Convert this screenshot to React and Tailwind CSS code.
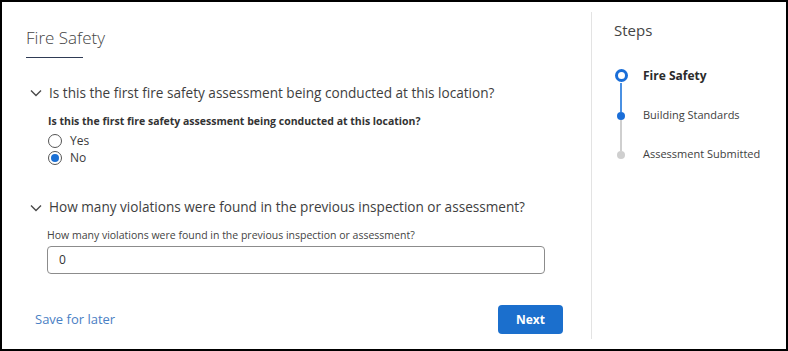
import React, { useState } from "react";

const font = { fontFamily: '"Open Sans", "Noto Sans", sans-serif' };

function Chevron() {
  return (
    <svg width="12" height="8" viewBox="0 0 12 8" className="shrink-0">
      <path d="M1 1.5 L6 6.5 L11 1.5" fill="none" stroke="#4a4a4a" strokeWidth="1.4" />
    </svg>
  );
}

function Radio({ checked, label, onClick }) {
  return (
    <label className="flex items-center gap-[8px] cursor-pointer h-[17px] leading-[17px]" onClick={onClick}>
      <span className="w-[14px] h-[14px] rounded-full border border-[#555] flex items-center justify-center bg-white">
        {checked && <span className="w-[8px] h-[8px] rounded-full bg-[#1a6fd4]" />}
      </span>
      <span className="text-[12px] leading-[17px] text-[#3a3a3a]">{label}</span>
    </label>
  );
}

export default function App() {
  const [firstTime, setFirstTime] = useState("no");
  const [violations, setViolations] = useState("0");

  return (
    <div style={font} className="w-[788px] h-[351px] border-2 border-black bg-white flex">
      <div className="w-[589px] flex flex-col pl-[24px] pr-[24px] pt-[24px]">
        <h1 className="text-[17px] font-light text-[#444] leading-[24px]">Fire Safety</h1>
        <div className="w-[57px] h-[1px] bg-[#2f3b55] mt-[7px]" />

        <div className="mt-[25px] flex items-center gap-[7px] pl-[4px]">
          <Chevron />
          <span className="text-[13.6px] text-[#3e3e3e]">Is this the first fire safety assessment being conducted at this location?</span>
        </div>
        <div className="pl-[22px] mt-[10px]">
          <div className="text-[10.5px] font-bold text-[#333] leading-[16px]">Is this the first fire safety assessment being conducted at this location?</div>
          <div className="mt-[3px] flex flex-col">
            <Radio checked={firstTime === "yes"} label="Yes" onClick={() => setFirstTime("yes")} />
            <Radio checked={firstTime === "no"} label="No" onClick={() => setFirstTime("no")} />
          </div>
        </div>

        <div className="mt-[31px] flex items-center gap-[7px] pl-[4px]">
          <Chevron />
          <span className="text-[13.6px] text-[#3e3e3e]">How many violations were found in the previous inspection or assessment?</span>
        </div>
        <div className="pl-[21px] mt-[10px]">
          <div className="text-[10.5px] text-[#444] leading-[14px]">How many violations were found in the previous inspection or assessment?</div>
          <input
            value={violations}
            onChange={(e) => setViolations(e.target.value)}
            className="mt-[4px] w-[498px] h-[28px] border border-[#8c8c8c] rounded-[4px] px-[11px] text-[12px] text-[#333] outline-none"
          />
        </div>

        <div className="mt-auto mb-[15px] flex items-center justify-between pl-[9px] pr-[4px]">
          <button className="text-[13px] text-[#4a80c4]">Save for later</button>
          <button className="w-[65px] h-[29px] rounded-[4px] bg-[#1b6fcd] text-white text-[12px] font-bold">Next</button>
        </div>
      </div>

      <div className="my-[10px] w-[1px] bg-[#e3e3e3]" />

      <div className="flex-1 pl-[22px] pt-[17px]">
        <div className="text-[15px] text-[#444]">Steps</div>
        <div className="mt-[27px] flex flex-col">
          <div className="flex items-center h-[14px]">
            <div className="w-[14px] flex justify-center">
              <span className="w-[13px] h-[13px] rounded-full border-[3px] border-[#1a6ed8]" />
            </div>
            <span className="ml-[15px] text-[12px] font-bold text-[#2b2b2b]">Fire Safety</span>
          </div>
          <div className="w-[14px] flex justify-center">
            <span className="w-[2px] h-[29px] bg-[#4a90e2]" />
          </div>
          <div className="flex items-center h-[8px]">
            <div className="w-[14px] flex justify-center">
              <span className="w-[8px] h-[8px] rounded-full bg-[#1a6ed8]" />
            </div>
            <span className="ml-[15px] text-[11px] text-[#3e3e3e]">Building Standards</span>
          </div>
          <div className="w-[14px] flex justify-center">
            <span className="w-[2px] h-[31px] bg-[#cfcfcf]" />
          </div>
          <div className="flex items-center h-[8px]">
            <div className="w-[14px] flex justify-center">
              <span className="w-[8px] h-[8px] rounded-full bg-[#cfcfcf]" />
            </div>
            <span className="ml-[15px] text-[11px] text-[#3e3e3e]">Assessment Submitted</span>
          </div>
        </div>
      </div>
    </div>
  );
}
